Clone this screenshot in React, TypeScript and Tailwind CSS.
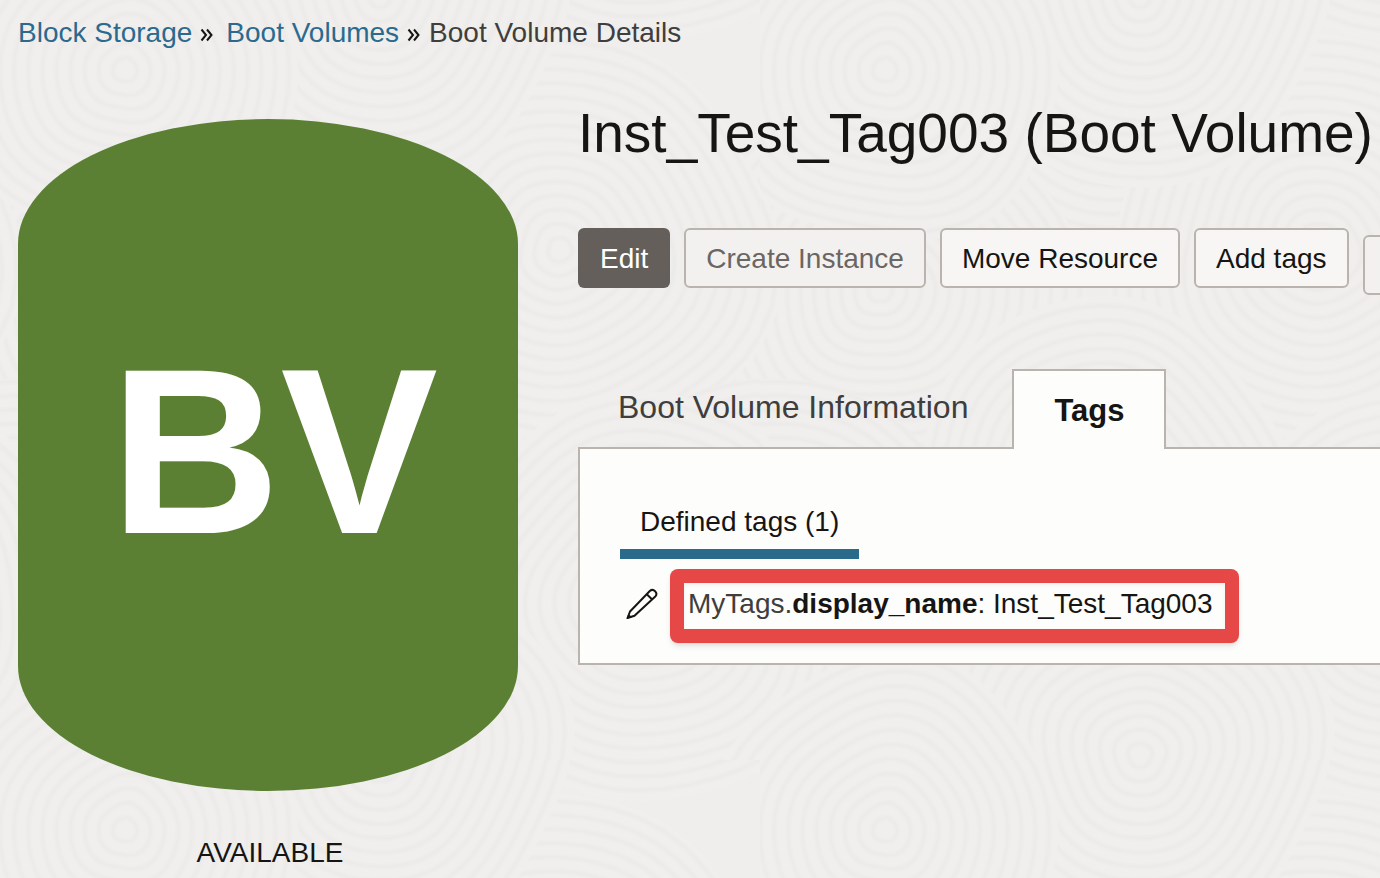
import React from "react";

const SWIRLS = [
  { x: 350, y: 60, r: 210 },
  { x: 120, y: 290, r: 200 },
  { x: 560, y: 250, r: 215 },
  { x: 20, y: 590, r: 210 },
  { x: 340, y: 490, r: 190 },
  { x: 640, y: 600, r: 205 },
  { x: 380, y: 755, r: 190 },
  { x: 125, y: 830, r: 175 },
];
const TILE = 760;
const COPIES = [
  [0, 0],
  [TILE, 0],
  [-TILE, 0],
  [0, TILE],
  [0, -TILE],
];

function ringPath(cx: number, cy: number, r: number) {
  const points: string[] = [];
  for (let i = 0; i < 48; i++) {
    const a = (i / 48) * Math.PI * 2;
    const d = r * (1 + 0.035 * Math.sin(a * 3 + cx) + 0.02 * Math.cos(a * 5 + cy));
    points.push(`${(cx + d * Math.cos(a)).toFixed(1)} ${(cy + d * Math.sin(a)).toFixed(1)}`);
  }
  return `M${points.join("L")}Z`;
}

function Texture() {
  return (
    <svg aria-hidden="true" className="absolute inset-0 -z-10 h-full w-full">
      <defs>
        <pattern id="waves" width={TILE} height={TILE} patternUnits="userSpaceOnUse">
          {SWIRLS.map((s, i) =>
            COPIES.map(([dx, dy]) => {
              const rings: number[] = [];
              for (let r = 12; r < s.r; r += 14) rings.push(r);
              return (
                <g key={`${i}:${dx}:${dy}`} fill="none">
                  <path d={ringPath(s.x + dx, s.y + dy, s.r)} fill="#f0efed" />
                  {rings.map((r) => (
                    <path key={r} d={ringPath(s.x + dx, s.y + dy, r)} stroke="#eeedeb" strokeWidth="6" />
                  ))}
                  {rings.map((r) => (
                    <path key={r} d={ringPath(s.x + dx, s.y + dy, r)} stroke="#ecebe9" strokeWidth="2" />
                  ))}
                </g>
              );
            }),
          )}
        </pattern>
      </defs>
      <rect width="100%" height="100%" fill="url(#waves)" />
    </svg>
  );
}

function Separator() {
  return (
    <svg aria-hidden="true" width="14" height="14" viewBox="0 0 14 14" fill="none" stroke="#161513" strokeWidth="2" className="mt-1">
      <path d="M1.5 1.5 6 7 1.5 12.5M7 1.5 11.5 7 7 12.5" />
    </svg>
  );
}

function Pencil() {
  return (
    <svg aria-hidden="true" width="32" height="32" viewBox="0 0 32 32" fill="none" stroke="#161513" strokeWidth="2" strokeLinejoin="round">
      <path d="M1.5 30 4 23.5 23.8 3A3.9 3.9 0 0 1 29.3 8.5L8.5 27.8ZM20.5 6 26.2 11.4" />
      <path d="M.5 31 6 29 2.5 26Z" fill="#161513" stroke="none" />
    </svg>
  );
}

const button = "h-[60px] shrink-0 whitespace-nowrap rounded-md border-2 border-[#bab4ae] px-5 pt-[2px] text-[28px]";

export default function App() {
  return (
    <div className="relative isolate min-h-screen overflow-hidden bg-[#efeeec] font-['Liberation_Sans',Arial,sans-serif] text-[#161513]">
      <Texture />
      <nav aria-label="Breadcrumb" className="flex items-center gap-2 px-[18px] pt-[17px] text-[28px] leading-8">
        <a href="#storage" className="text-[#2a6a8e]">Block Storage</a>
        <Separator />
        <a href="#volumes" className="ml-1 text-[#2a6a8e]">Boot Volumes</a>
        <Separator />
        <span className="text-[#403e3c]">Boot Volume Details</span>
      </nav>

      <div className="flex gap-[60px] pl-[18px]">
        <aside className="w-[500px] shrink-0 pt-[70px] text-center">
          <div className="flex h-[672px] items-center justify-center rounded-[50%/125px] bg-[#5b8034] pb-2 pl-3 text-[236px] leading-none font-bold text-white">
            BV
          </div>
          <p className="mt-[46px] pl-1 text-[28px] leading-8">AVAILABLE</p>
        </aside>

        <main className="min-w-0 flex-1 pt-[52px]">
          <h1 className="text-[55px] leading-16 whitespace-nowrap">Inst_Test_Tag003 (Boot Volume)</h1>

          <div className="mt-[63px] flex items-start gap-[14px]">
            <button type="button" className="h-[60px] shrink-0 rounded-md bg-[#645f5a] px-[22px] pt-[2px] text-[28px] text-white">Edit</button>
            <button type="button" className={`${button} bg-[#f3f1ef] text-[#6b6662]`}>Create Instance</button>
            <button type="button" className={`${button} bg-[#f7f6f4]`}>Move Resource</button>
            <button type="button" className={`${button} bg-[#f7f6f4]`}>Add tags</button>
            <button type="button" aria-label="More" className={`${button} mt-[7px] bg-[#f3f1ef]`} />
          </div>

          <div role="tablist" className="mt-[72px] flex items-end pl-10">
            <button type="button" role="tab" aria-selected="false" className="h-20 pr-11 text-[32px] text-[#403e3c]">
              Boot Volume Information
            </button>
            <button type="button" role="tab" aria-selected="true" className="z-10 -mb-[2px] h-20 border-2 border-b-0 border-[#bab4ae] bg-[#fdfdfb] px-10 pt-[2px] text-[31px] font-bold">
              Tags
            </button>
          </div>

          <section className="border-2 border-r-0 border-[#bab4ae] bg-[#fdfdfb] px-10 pt-[53px] pb-5">
            <h2 className="w-fit border-b-10 border-[#2a6a8a] px-5 pt-1 pb-[11px] text-[28px] leading-8">Defined tags (1)</h2>
            <div className="mt-[10px] flex items-center gap-3">
              <button type="button" aria-label="Edit tag" className="-mt-1 pl-[6px]">
                <Pencil />
              </button>
              <p className="rounded-lg bg-[#e64848] p-[14px] shadow-md">
                <span className="block bg-[#fdfdfb] pt-[5px] pr-3 pb-[9px] pl-1 text-[28px] leading-8 whitespace-nowrap inset-shadow-sm">
                  <span className="text-[#403e3c]">MyTags.</span>
                  <strong>display_name</strong>: Inst_Test_Tag003
                </span>
              </p>
            </div>
          </section>
        </main>
      </div>
    </div>
  );
}
